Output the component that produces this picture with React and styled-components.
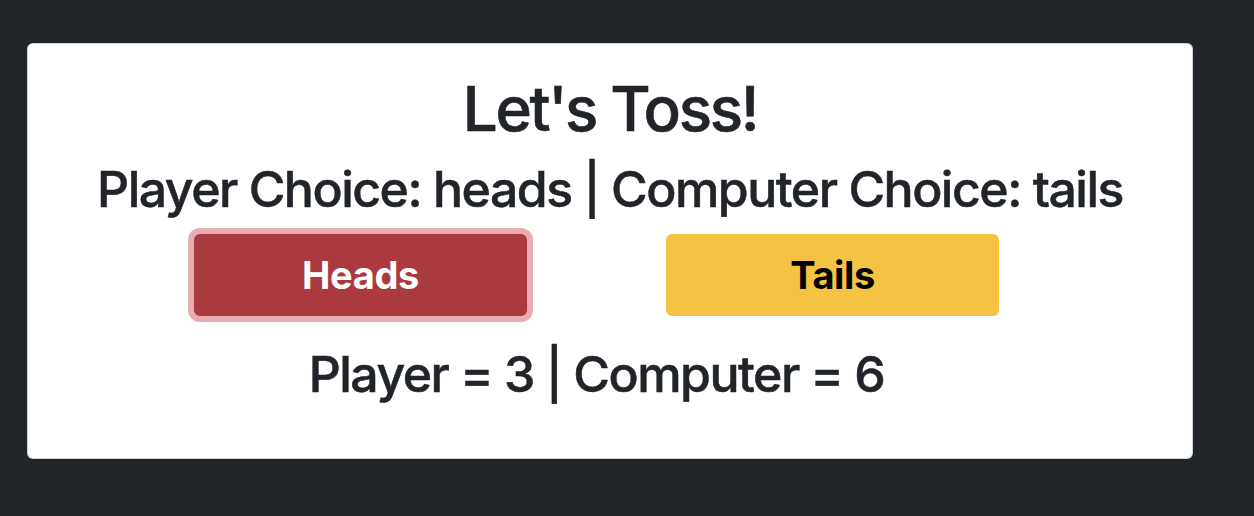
import React from "react";
import styled, { createGlobalStyle } from "styled-components";

const Global = createGlobalStyle`
  html, body { margin: 0; padding: 0; background: #212529; }
  body { font-family: Inter, "Noto Sans", sans-serif; color: #212529; }
`;

const Page = styled.div`
  padding: 43px 61px 40px 27px;
`;

const Card = styled.div`
  background: #fff;
  border: 1px solid rgba(0, 0, 0, 0.175);
  border-radius: 6px;
  height: 416px;
  box-sizing: border-box;
  padding-top: 28px;
  display: flex;
  flex-direction: column;
  align-items: stretch;
`;

const Title = styled.h1`
  margin: 0 0 13px;
  font-size: 62px;
  font-weight: 500;
  line-height: 1.2;
  letter-spacing: -0.038em;
  text-align: center;
  -webkit-text-stroke: 0.6px #212529;
`;

const Subtitle = styled.h2`
  margin: 0;
  font-size: 50px;
  font-weight: 500;
  line-height: 1.2;
  letter-spacing: -0.03em;
  text-align: center;
  -webkit-text-stroke: 0.5px #212529;
`;

const Controls = styled.div`
  padding-right: 27px;
  display: flex;
  flex-direction: column;
  align-items: center;
`;

const ButtonRow = styled.div`
  display: flex;
  justify-content: center;
  gap: 139px;
  margin-top: 15px;
`;

const Button = styled.button`
  width: 333px;
  height: 82px;
  border: none;
  border-radius: 6px;
  font-family: Inter, "Noto Sans", sans-serif;
  font-size: 38px;
  font-weight: 700;
  letter-spacing: -0.01em;
  cursor: pointer;
  background: ${(p) => (p.$variant === "danger" ? "#ab3a40" : "#f5c343")};
  color: ${(p) => (p.$variant === "danger" ? "#fff" : "#000")};
  box-shadow: ${(p) => (p.$focused ? "0 0 0 6px #e9acb0" : "none")};
`;

const Score = styled.h2`
  margin: 28px 0 0;
  font-size: 50px;
  font-weight: 500;
  line-height: 1.2;
  letter-spacing: -0.03em;
  text-align: center;
  -webkit-text-stroke: 0.5px #212529;
`;

export default function App() {
  return (
    <>
      <Global />
      <Page>
        <Card>
          <Title>Let's Toss!</Title>
          <Subtitle>Player Choice: heads | Computer Choice: tails</Subtitle>
          <Controls>
            <ButtonRow>
              <Button $variant="danger" $focused>Heads</Button>
              <Button $variant="warning">Tails</Button>
            </ButtonRow>
            <Score>Player = 3 | Computer = 6</Score>
          </Controls>
        </Card>
      </Page>
    </>
  );
}
